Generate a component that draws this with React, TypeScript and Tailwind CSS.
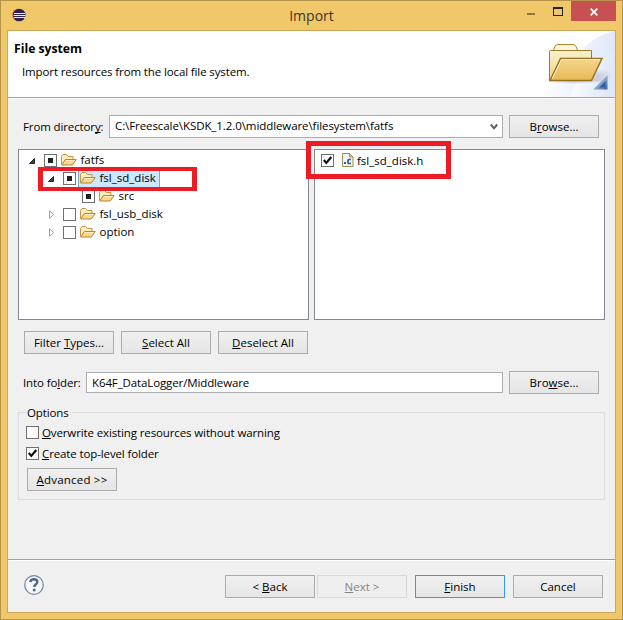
import type { ReactNode } from 'react';
import clsx from 'clsx';

type CheckState = 'none' | 'partial' | 'checked';

function Mn({ children }: { children: ReactNode }) {
  return <span className="underline decoration-1 underline-offset-[1px] [text-decoration-skip-ink:none]">{children}</span>;
}

function Button({ children, variant = 'normal' }: { children: ReactNode; variant?: 'normal' | 'default' | 'disabled' }) {
  return (
    <button
      className={clsx(
        'flex h-[23px] w-[90px] shrink-0 items-center justify-center border pt-px whitespace-nowrap tracking-normal',
        variant === 'normal' && 'border-[#acacac] bg-linear-to-b from-[#f0f0f0] to-[#e5e5e5]',
        variant === 'default' && 'border-[#3399ff] bg-linear-to-b from-[#f0f0f0] to-[#e5e5e5]',
        variant === 'disabled' && 'border-[#d9d9d9] bg-[#efefef] text-[#838383]',
      )}
    >
      <span>{children}</span>
    </button>
  );
}

function CheckBox({ state }: { state: CheckState }) {
  return (
    <span className="flex size-[13px] shrink-0 items-center justify-center border border-[#707070] bg-white">
      {state === 'partial' && <span className="size-[5px] bg-[#212121]" />}
      {state === 'checked' && (
        <svg width="11" height="11" viewBox="0 0 11 11" fill="none">
          <path d="M1.800 5 4.300 7.900 9.300 2" stroke="#111" strokeWidth="2.200" />
        </svg>
      )}
    </span>
  );
}

function FolderIcon() {
  return (
    <svg width="16" height="16" viewBox="0 0 16 16" className="shrink-0" strokeLinejoin="round">
      <path d="M.5 12.500V4.500L2 2.500h3.500L7.500 4.500h4.500v4" fill="#fbeebb" stroke="#c2954a" />
      <path d="M.7 13 4.300 7.500h10.900L11.300 13Z" fill="#f8d88c" stroke="#b98531" />
      <path d="M5 8.500h8.500" stroke="#fff0c4" />
    </svg>
  );
}

function SourceIcon() {
  return (
    <svg width="12" height="14" viewBox="0 0 12 14" className="shrink-0">
      <path d="M.5.5h7l3.500 3.500v9.500H.5Z" fill="#eef5fc" stroke="#a58b4a" />
      <path d="M7.500.5v3.500H11Z" fill="#e6c979" stroke="#b4914a" />
      <rect x="2" y="9" width="2" height="2" fill="#2a5f93" />
      <path d="M9 6.500H7a1 1 0 0 0-1 1v2a1 1 0 0 0 1 1h2" fill="none" stroke="#2a5f93" strokeWidth="1.700" />
    </svg>
  );
}

function Arrow({ open }: { open?: boolean }) {
  return (
    <svg width="8" height="10" viewBox="0 0 8 10" className="shrink-0">
      {open ? (
        <path d="M6.500 3.500v5h-5Z" fill="#404040" stroke="#262626" strokeLinejoin="round" />
      ) : (
        <path d="M2.500 1.800v7.500L6.700 5.500Z" fill="#fff" stroke="#a0a0a0" />
      )}
    </svg>
  );
}

function WizardBanner() {
  return (
    <svg width="75" height="66" viewBox="0 0 75 66">
      <defs>
        <linearGradient id="sky" x1="0" y1="0" x2="1" y2=".15">
          <stop offset=".15" stopColor="#fff" />
          <stop offset="1" stopColor="#dfe7f8" />
        </linearGradient>
        <linearGradient id="back" x1="0" y1="0" x2="0" y2="1">
          <stop offset="0" stopColor="#fbf1cc" />
          <stop offset="1" stopColor="#efd184" />
        </linearGradient>
        <linearGradient id="front" x1="0" y1="0" x2="0" y2="1">
          <stop offset="0" stopColor="#f5d58b" />
          <stop offset="1" stopColor="#e6b957" />
        </linearGradient>
        <linearGradient id="corner" x1="0" y1="0" x2="1" y2="1">
          <stop offset=".3" stopColor="#b5cdeb" />
          <stop offset="1" stopColor="#3a62a2" />
        </linearGradient>
        <radialGradient id="shade">
          <stop offset="0" stopColor="#9b93a8" stopOpacity=".65" />
          <stop offset="1" stopColor="#9b93a8" stopOpacity="0" />
        </radialGradient>
      </defs>
      <path d="M75 0C58 4 43 13 38 28L0 66h75Z" fill="url(#sky)" />
      <path d="M75 20C55 25 40 38 30 66h45Z" fill="url(#sky)" opacity=".7" />
      <ellipse cx="35" cy="49" rx="34" ry="4" fill="url(#shade)" />
      <ellipse cx="58" cy="45" rx="14" ry="7" fill="url(#shade)" opacity=".6" />
      <path d="M13.500 19 15 15.500Q16 13.500 18 13.500H33Q35 13.500 36 15.500L37.500 19" fill="#fcf5da" stroke="#a98532" />
      <path d="M9.500 49.500V20.500Q9.500 19.500 10.500 19.500H51.500V49.500Z" fill="url(#back)" stroke="#a07b29" />
      <path d="M10 49.500 20.500 27.500H62L51.500 49.500Z" fill="url(#front)" stroke="#94701f" strokeWidth="1.400" />
      <path d="M12.500 47 21.500 28.500H60" fill="none" stroke="#fff3cf" />
      <path d="M67.500 44v14.500H53Z" fill="url(#corner)" />
      <path d="M65.500 50v6.500H59Z" fill="#27518f" opacity=".8" />
    </svg>
  );
}

function EclipseIcon() {
  return (
    <svg width="16" height="16" viewBox="0 0 16 16">
      <circle cx="7" cy="8" r="6.300" fill="#f59a2c" />
      <circle cx="8.200" cy="8" r="6.300" fill="#2c2255" />
      <path d="M3 6.500h11M2.500 8.500h12M3 10.500h11" stroke="#e9e7f3" />
    </svg>
  );
}

const TREE: { label: string; pad: string; state: CheckState; arrow?: 'open' | 'closed'; selected?: boolean }[] = [
  { label: 'fatfs', pad: 'pl-[9px]', state: 'partial', arrow: 'open' },
  { label: 'fsl_sd_disk', pad: 'pl-[28px]', state: 'partial', arrow: 'open', selected: true },
  { label: 'src', pad: 'pl-[47px]', state: 'partial' },
  { label: 'fsl_usb_disk', pad: 'pl-[28px]', state: 'none', arrow: 'closed' },
  { label: 'option', pad: 'pl-[28px]', state: 'none', arrow: 'closed' },
];

function FolderTree() {
  return (
    <div className="relative h-[171px] w-[291px] border border-[#828790] bg-white pt-px tracking-normal">
      {TREE.map((row) => (
        <div key={row.label} className={clsx('flex h-[18px] items-center', row.pad)}>
          <span className="flex w-4 shrink-0">{row.arrow && <Arrow open={row.arrow === 'open'} />}</span>
          <CheckBox state={row.state} />
          <span
            className={clsx(
              'ml-0.5 flex h-[18px] items-center border-l pr-[3px] pl-px',
              row.selected ? 'border-r border-[#7da2ce] bg-[#cce8ff]' : 'border-transparent',
            )}
          >
            <FolderIcon />
            <span className="pl-[3.5px]">{row.label}</span>
          </span>
        </div>
      ))}
      <div className="absolute top-[17px] left-[19px] h-[24px] w-[159px] border-[5px] border-y-4 border-[#ed1c24]" />
    </div>
  );
}

function FileList() {
  return (
    <div className="relative h-[171px] w-[291px] border border-[#828790] bg-white pt-px tracking-normal">
      <div className="flex h-[18px] items-center pl-[6px]">
        <CheckBox state="checked" />
        <span className="ml-2 flex items-center gap-[3px]">
          <SourceIcon />
          <span className="pt-0.5">fsl_sd_disk.h</span>
        </span>
      </div>
      <div className="absolute -top-[9px] -left-[9px] h-[38px] w-[145px] border-[5px] border-[#ed1c24]" />
    </div>
  );
}

function TitleBar() {
  return (
    <div className="flex h-[29px] items-start">
      <div className="w-[110px] pt-[6px] pl-[10px]">
        <EclipseIcon />
      </div>
      <h1 className="flex-1 pt-1 pr-3 text-center text-[14px] leading-[22px] tracking-normal text-[#3d3524]">Import</h1>
      <div className="flex w-[98px]">
        <span className="mt-3 ml-[3px] h-0.5 w-2 bg-[#8d7747]" />
        <span className="mt-[6px] ml-[18px] h-[9px] w-2.5 border border-t-2 border-[#222]" />
        <span className="ml-2 flex h-5 w-[45px] items-center justify-center bg-[#c75050] pt-0.5">
          <svg width="8" height="8" viewBox="0 0 8 8">
            <path d="m.7.7 6.600 6.600M7.300.7.700 7.300" stroke="#fff" strokeWidth="1.700" />
          </svg>
        </span>
      </div>
    </div>
  );
}

export default function App() {
  return (
    <div className="h-[620px] w-[623px] border border-[#b6954b] bg-[#f0c869] font-['Open_Sans','Noto_Sans',sans-serif] text-[11.5px] leading-4 tracking-[-0.12px] text-black">
      <TitleBar />
      <main className="ml-1.5 flex h-[583px] w-[609px] flex-col border border-[#cda755] bg-[#f0f0f0]">
        <header className="flex h-[66px] shrink-0 justify-between bg-white">
          <div className="pt-2.5 pl-1.5">
            <h2 className="text-[12.2px] leading-4 font-bold tracking-normal">File system</h2>
            <p className="pt-[7px] pl-2">Import resources from the local file system.</p>
          </div>
          <WizardBanner />
        </header>
        <div className="h-0.5 shrink-0 border-t border-b border-t-[#a0a0a0] border-b-white" />

        <section className="flex h-[460px] shrink-0 flex-col pl-2.5">
          <div className="mt-4 flex h-[23px] items-center">
            <label className="w-[86px] pl-[5px] whitespace-nowrap">
              From director<Mn>y</Mn>:
            </label>
            <div className="ml-[5px] flex h-[23px] w-[394px] items-center justify-between border border-[#abadb3] bg-white pr-1 pl-[5px]">
              <span className="pb-0.5 tracking-[-0.08px]">C:\Freescale\KSDK_1.2.0\middleware\filesystem\fatfs</span>
              <svg width="8" height="7" viewBox="0 0 8 7">
                <path d="M.8 1.500 4 5.300 7.200 1.500" fill="none" stroke="#606060" strokeWidth="2" />
              </svg>
            </div>
            <div className="ml-1.5">
              <Button>
                B<Mn>r</Mn>owse...
              </Button>
            </div>
          </div>

          <div className="mt-[11px] flex gap-[5px]">
            <FolderTree />
            <FileList />
          </div>

          <div className="mt-[11px] flex gap-[7px] pl-1.5">
            <Button>
              Filter <Mn>T</Mn>ypes...
            </Button>
            <Button>
              <Mn>S</Mn>elect All
            </Button>
            <Button>
              <Mn>D</Mn>eselect All
            </Button>
          </div>

          <div className="mt-[17px] flex h-[23px] items-center">
            <label className="w-[68px] pl-[5px] whitespace-nowrap">
              Into fo<Mn>l</Mn>der:
            </label>
            <div className="mr-1.5 flex h-[21px] w-[417px] items-center border border-[#abadb3] bg-white pl-[5px]">
              K64F_DataLogger/Middleware
            </div>
            <Button>
              Bro<Mn>w</Mn>se...
            </Button>
          </div>

          <fieldset className="mt-[10px] h-[96px] w-[587px] border border-[#dcdcdc] pl-[7px]">
            <legend className="px-px pt-px leading-4">Options</legend>
            <label className="mt-px flex h-[21px] items-center gap-[3px]">
              <CheckBox state="none" />
              <span>
                <Mn>O</Mn>verwrite existing resources without warning
              </span>
            </label>
            <label className="flex h-[21px] items-center gap-[3px]">
              <CheckBox state="checked" />
              <span>
                <Mn>C</Mn>reate top-level folder
              </span>
            </label>
            <div className="mt-1 ml-px">
              <Button>
                <span className="tracking-[0.2px]">
                  <Mn>A</Mn>dvanced &gt;&gt;
                </span>
              </Button>
            </div>
          </fieldset>
        </section>

        <div className="h-0.5 shrink-0 border-t border-b border-t-[#a0a0a0] border-b-white" />
        <footer className="flex pt-3.5 pl-4">
          <svg width="20" height="20" viewBox="0 0 20 20" fill="none" className="mr-[181px]">
            <circle cx="10" cy="10" r="9.300" fill="#f7f8fa" stroke="#7486a1" strokeWidth="1.200" />
            <path d="M6.300 7.200C6.500 4.800 8.300 4.200 10 4.200c2 0 3.300 1.100 3.300 2.700 0 2.300-3 2.400-3 5.100" stroke="#52698c" strokeWidth="2.400" />
            <circle cx="10.200" cy="15" r="1.500" fill="#52698c" />
          </svg>
          <Button>
            &lt; <Mn>B</Mn>ack
          </Button>
          <div className="mr-2 ml-0.5">
            <Button variant="disabled">
              <Mn>N</Mn>ext &gt;
            </Button>
          </div>
          <Button variant="default">
            <Mn>F</Mn>inish
          </Button>
          <div className="ml-2">
            <Button>Cancel</Button>
          </div>
        </footer>
      </main>
    </div>
  );
}
